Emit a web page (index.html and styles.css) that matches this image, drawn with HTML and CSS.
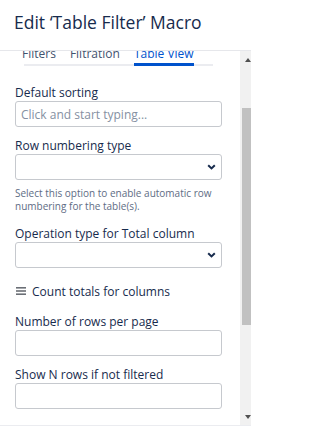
FILE: index.html
```html
<!DOCTYPE html>
<html lang="en">
<head>
<meta charset="utf-8">
<title>Edit 'Table Filter' Macro</title>
<link rel="stylesheet" href="styles.css">
</head>
<body>
<div class="modal">
  <header class="modal-header">
    <h1 class="modal-title">Edit ‘Table Filter’ Macro</h1>
  </header>
  <div class="modal-body">
    <div class="content">
      <div class="tabs">
        <div class="tab">Filters</div>
        <div class="tab">Filtration</div>
        <div class="tab active">Table View</div>
      </div>

      <div class="field field-first">
        <label class="label">Default sorting</label>
        <div class="input"><span class="placeholder">Click and start typing...</span></div>
      </div>

      <div class="field">
        <label class="label">Row numbering type</label>
        <div class="input select">
          <svg class="chevron" width="9" height="6" viewBox="0 0 9 6"><path d="M1.2 1.2 L4.5 4.4 L7.8 1.2" fill="none" stroke="#172b4d" stroke-width="2"/></svg>
        </div>
        <p class="help">Select this option to enable automatic row numbering for the table(s).</p>
      </div>

      <div class="field field-after-help">
        <label class="label">Operation type for Total column</label>
        <div class="input select">
          <svg class="chevron" width="9" height="6" viewBox="0 0 9 6"><path d="M1.2 1.2 L4.5 4.4 L7.8 1.2" fill="none" stroke="#172b4d" stroke-width="2"/></svg>
        </div>
      </div>

      <div class="toggle-row">
        <svg class="list-icon" width="10" height="8" viewBox="0 0 10 8"><rect x="0" y="0" width="10" height="1.6" fill="#6b6f76"/><rect x="0" y="3.2" width="10" height="1.6" fill="#6b6f76"/><rect x="0" y="6.4" width="10" height="1.6" fill="#6b6f76"/></svg>
        <span>Count totals for columns</span>
      </div>

      <div class="field field-after-help">
        <label class="label">Number of rows per page</label>
        <div class="input"></div>
      </div>

      <div class="field">
        <label class="label">Show N rows if not filtered</label>
        <div class="input"></div>
      </div>

      <div class="field field-last">
        <label class="label">Sticky header</label>
        <div class="input"></div>
      </div>
    </div>
    <div class="scrollbar">
      <div class="sb-btn"><span class="arrow-up"></span></div>
      <div class="sb-gap"></div>
      <div class="sb-thumb"></div>
      <div class="sb-rest"></div>
      <div class="sb-btn"><span class="arrow-down"></span></div>
    </div>
  </div>
  <footer class="modal-footer"></footer>
</div>
</body>
</html>
```

FILE: styles.css
```css
html, body {
  margin: 0;
  padding: 0;
  background: #ffffff;
}
body {
  font-family: "Open Sans", "Noto Sans", sans-serif;
  color: #172b4d;
  overflow: hidden;
}
.modal {
  width: 251px;
  height: 438px;
  display: flex;
  flex-direction: column;
}
.modal-header {
  padding: 10px 0 16px 14px;
  border-bottom: 1px solid #e6e7eb;
}
.modal-title {
  margin: 0;
  font-size: 17.5px;
  line-height: 24px;
  font-weight: 500;
  color: #172b4d;
  white-space: nowrap;
}
.modal-body {
  flex: 1;
  min-height: 0;
  display: flex;
}
.content {
  flex: 1;
  min-width: 0;
  overflow: hidden;
  padding: 0 18px 0 15px;
}
.tabs {
  position: relative;
  display: flex;
  gap: 14px;
  margin: -5px 0 0 7px;
  width: 191px;
}
.tabs::before {
  content: "";
  position: absolute;
  left: 2px;
  right: 0;
  bottom: 0;
  height: 2px;
  background: #ebecf0;
}
.tab {
  position: relative;
  z-index: 1;
  font-size: 12px;
  line-height: 16px;
  padding-bottom: 1px;
  border-bottom: 3px solid transparent;
  color: #42526e;
  white-space: nowrap;
}
.tab.active {
  color: #0052cc;
  border-bottom-color: #0052cc;
}
.field {
  margin-top: 11px;
}
.field-first {
  margin-top: 19px;
}
.field-after-help {
  margin-top: 14px;
}
.field-last {
  margin-top: 14px;
}
.label {
  display: block;
  font-size: 12px;
  line-height: 16px;
  color: #172b4d;
  white-space: nowrap;
}
.input {
  box-sizing: border-box;
  height: 26px;
  border: 1px solid #c6c9ce;
  border-radius: 3px;
  background: #ffffff;
  display: flex;
  align-items: center;
  padding: 0 5px 0 5px;
}
.placeholder {
  font-size: 12px;
  color: #8590a2;
  white-space: nowrap;
}
.select {
  justify-content: flex-end;
}
.chevron {
  display: block;
}
.help {
  margin: 7px 0 0 0;
  font-size: 10px;
  line-height: 12.5px;
  color: #5e6c84;
}
.toggle-row {
  margin-top: 16px;
  display: flex;
  align-items: center;
  gap: 6px;
  padding-left: 1px;
  font-size: 12px;
  line-height: 16px;
  color: #172b4d;
  white-space: nowrap;
}
.list-icon {
  display: block;
  margin-top: -3px;
}
.scrollbar {
  width: 11px;
  flex: none;
  background: #f1f1f1;
  display: flex;
  flex-direction: column;
}
.sb-btn {
  height: 17px;
  flex: none;
  display: flex;
  align-items: center;
  padding-left: 5px;
}
.arrow-up {
  width: 0;
  height: 0;
  border-left: 3px solid transparent;
  border-right: 3px solid transparent;
  border-bottom: 4px solid #505050;
}
.arrow-down {
  width: 0;
  height: 0;
  border-left: 3px solid transparent;
  border-right: 3px solid transparent;
  border-top: 4px solid #505050;
}
.sb-gap {
  height: 40px;
  flex: none;
}
.sb-thumb {
  height: 217px;
  flex: none;
  margin-left: 2px;
  background: #c1c1c1;
}
.sb-rest {
  flex: 1;
}
.modal-footer {
  height: 12px;
  flex: none;
  border-top: 1px solid #ebecf0;
}
```
